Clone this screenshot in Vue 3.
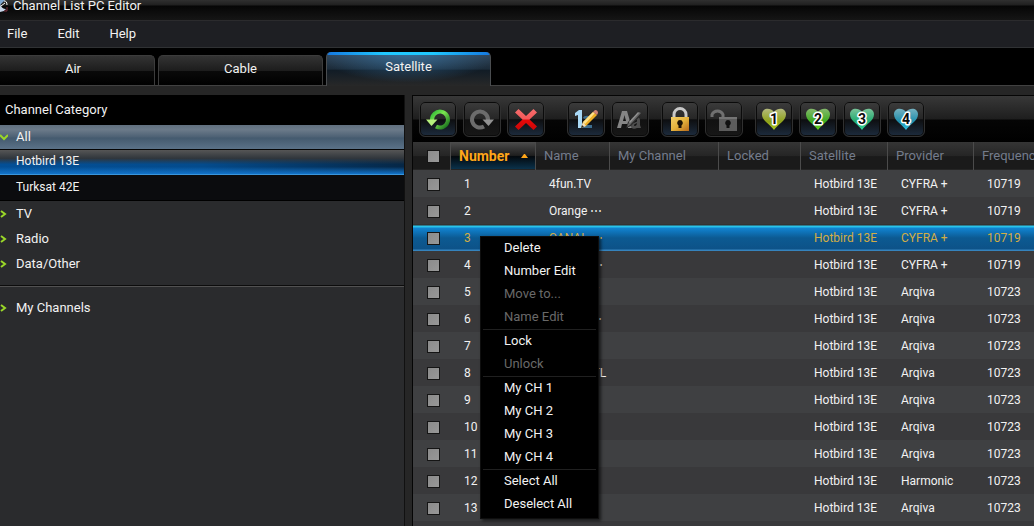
<script setup>
import { ref } from 'vue'

const tabs = ['Air', 'Cable', 'Satellite']
const activeTab = ref('Satellite')

const columns = ['Name', 'My Channel', 'Locked', 'Satellite', 'Provider', 'Frequency']
const names = [
  '4fun.TV', 'Orange ⋯', 'CANAL ⋯', 'CANAL ⋯', 'Music TV', 'Orange ⋯', 'Rai 1',
  'Arqiva RTL', 'Rai 2', 'Rai 3', 'Rai 4', 'TV 5', 'TV 6', 'TV 7'
]
const rows = names.map((name, i) => ({
  number: i + 1,
  name,
  provider: i < 4 ? 'CYFRA +' : i === 11 ? 'Harmonic' : 'Arqiva',
  frequency: i < 4 ? '10719' : '10723'
}))
const selectedRow = ref(3)

const hearts = [
  { n: 1, top: '#b4ba7c', mid: '#8fa31a', low: '#a9c51f' },
  { n: 2, top: '#84b86c', mid: '#3cab1e', low: '#66d51d' },
  { n: 3, top: '#78c298', mid: '#20ab70', low: '#31d99a' },
  { n: 4, top: '#74b0bf', mid: '#1e8eac', low: '#2fc3e3' }
]

const menuGroups = [
  [
    { label: 'Delete' },
    { label: 'Number Edit' },
    { label: 'Move to...', off: true },
    { label: 'Name Edit', off: true }
  ],
  [{ label: 'Lock' }, { label: 'Unlock', off: true }],
  [{ label: 'My CH 1' }, { label: 'My CH 2' }, { label: 'My CH 3' }, { label: 'My CH 4' }],
  [{ label: 'Select All' }, { label: 'Deselect All' }]
]
</script>

<template>
  <div class="app">
    <header class="title-bar">
      <svg class="dish" width="8" height="13" viewBox="0 0 8 13" aria-hidden="true">
        <path d="M0 0h5l-5 5z" fill="#7fa6cf" />
        <path d="M0 4c1 3 3 5 6 5L4 11 0 12z" fill="#c6d3e6" />
        <path d="M1 6l4-3M4 1c2 0 3 1 3 4" stroke="#fff" fill="none" />
        <path d="M7 7v4H4" stroke="#7c2f3a" fill="none" />
      </svg>
      <h1>Channel List PC Editor</h1>
    </header>

    <nav class="menu-bar">
      <button type="button">File</button>
      <button type="button">Edit</button>
      <button type="button">Help</button>
    </nav>

    <div class="tabs" role="tablist">
      <button
        v-for="t in tabs"
        :key="t"
        type="button"
        role="tab"
        :aria-selected="t === activeTab"
        :class="['tab', { active: t === activeTab }]"
        @click="activeTab = t"
      >{{ t }}</button>
    </div>

    <main class="main">
      <aside class="sidebar">
        <h2>Channel Category</h2>
        <button type="button" class="cat open">
          <svg width="8" height="8" viewBox="0 0 8 8" aria-hidden="true"><path d="M0 2l4 4 4-4" /></svg>All
        </button>
        <div class="sub">
          <button type="button" class="sat current">Hotbird 13E</button>
          <button type="button" class="sat">Turksat 42E</button>
        </div>
        <button v-for="c in ['TV', 'Radio', 'Data/Other']" :key="c" type="button" class="cat">
          <svg width="8" height="8" viewBox="0 0 8 8" aria-hidden="true"><path d="M1 1l4 3-4 3" /></svg>{{ c }}
        </button>
        <hr />
        <button type="button" class="cat">
          <svg width="8" height="8" viewBox="0 0 8 8" aria-hidden="true"><path d="M1 1l4 3-4 3" /></svg>My Channels
        </button>
      </aside>

      <section class="panel">
        <div class="toolbar">
          <div class="group wide">
            <button type="button" class="tool lit" aria-label="Undo">
              <svg width="26" height="24" viewBox="0 0 26 24">
                <defs>
                  <linearGradient id="undo" x1="0" y1="0" x2="1" y2="1">
                    <stop offset="0" stop-color="#2fb836" />
                    <stop offset=".4" stop-color="#7be650" />
                    <stop offset="1" stop-color="#12681a" />
                  </linearGradient>
                </defs>
                <path d="M7 13A8 8 0 1 1 11 19.500" fill="none" stroke="url(#undo)" stroke-width="4" />
                <path d="M1 12.500h11.500L6.500 19z" fill="#b4f07d" />
              </svg>
            </button>
            <button type="button" class="tool" aria-label="Redo">
              <svg width="26" height="24" viewBox="0 0 26 24">
                <path d="M19 13A8 8 0 1 0 15 19.500" fill="none" stroke="#6c6c6c" stroke-width="4" />
                <path d="M25 12.500H13.500l6 6.500z" fill="#919191" />
              </svg>
            </button>
            <button type="button" class="tool lit" aria-label="Delete">
              <svg width="24" height="24" viewBox="0 0 24 24">
                <defs>
                  <linearGradient id="cross" x1="0" y1="0" x2="0" y2="1">
                    <stop offset="0" stop-color="#f56e6e" />
                    <stop offset=".48" stop-color="#f45757" />
                    <stop offset=".52" stop-color="#e80808" />
                    <stop offset="1" stop-color="#c90808" />
                  </linearGradient>
                </defs>
                <path d="M4.500 2L12 9l7.500-7L23 5.500 15.500 12.500 23 19.500 19.500 23 12 16l-7.500 7L1 19.500 8.500 12.500 1 5.500z" fill="url(#cross)" />
              </svg>
            </button>
          </div>
          <div class="group">
            <button type="button" class="tool lit" aria-label="Edit number">
              <svg width="26" height="24" viewBox="0 0 26 24">
                <path d="M2 6l4-3h3v18H5V8L2 9z" fill="#a9d8f5" />
                <path d="M10 11c1-3 8-3 8 1 0 3-4 4-5 6h6v3H9v-2c1-4 6-5 6-7 0-1-2-1-3 0z" fill="#3d6e90" />
                <path d="M8 21l2-6L20 5l4 3-11 11z" fill="#eeae24" />
                <path d="M10 15L20 5l2 1-10 11z" fill="#ffe28a" />
                <path d="M20 5l2-2q3 0 3 3l-1 2z" fill="#d38372" />
                <path d="M8 21l2-6 3 4z" fill="#f0dfbc" />
                <path d="M8 21l1-3 2 2z" fill="#222" />
              </svg>
            </button>
            <button type="button" class="tool" aria-label="Edit name">
              <svg width="26" height="24" viewBox="0 0 26 24">
                <path d="M0 21L5 4h5l5 17h-4l-1-4H5l-1 4zM6 14h3L7.500 8z" fill="#858585" fill-rule="evenodd" />
                <path d="M14 12c2-4 9-3 9 1v5l1 3h-4c-3 2-7 0-6-3 1-3 6-2 6-4 0-2-3-1-3 0zM17 18c0 2 3 1 3-2-1 1-3 1-3 2z" fill="#4e4e4e" fill-rule="evenodd" />
                <path d="M9 21l2-6L22 4l3 3-11 12z" fill="#2c2c2c" />
                <path d="M10 20l2-5L22 5l2 1-11 12z" fill="#666" />
                <path d="M12 15L21 5l1 1-9 10z" fill="#929292" />
              </svg>
            </button>
          </div>
          <div class="group">
            <button type="button" class="tool lit" aria-label="Lock">
              <svg width="22" height="26" viewBox="0 0 22 26">
                <defs>
                  <linearGradient id="gold" x1="0" y1="0" x2="1" y2="1">
                    <stop offset="0" stop-color="#f2ce68" />
                    <stop offset=".5" stop-color="#e5b33c" />
                    <stop offset="1" stop-color="#b86a1c" />
                  </linearGradient>
                </defs>
                <path d="M5 12V8.500a6 6 0 0 1 12 0V12" fill="none" stroke="#c9c9c9" stroke-width="3" />
                <path d="M2 11h18v14H2z" fill="url(#gold)" />
                <path d="M11 14a3 3 0 0 1 1.500 5.500V22h-3v-2.500A3 3 0 0 1 11 14z" fill="#1c1205" />
              </svg>
            </button>
            <button type="button" class="tool" aria-label="Unlock">
              <svg width="30" height="26" viewBox="0 0 30 26">
                <path d="M3 11V8.500a6 6 0 0 1 11 0V12" fill="none" stroke="#707070" stroke-width="3" />
                <path d="M10 11h18v14H10z" fill="#5c5c5c" />
                <path d="M10 11h18v2H10z" fill="#747474" />
                <path d="M19 14a3 3 0 0 1 1.500 5.500V22h-3v-2.500A3 3 0 0 1 19 14z" fill="#111" />
              </svg>
            </button>
          </div>
          <div class="group">
            <button v-for="h in hearts" :key="h.n" type="button" class="tool lit" :aria-label="'My channel ' + h.n">
              <svg width="26" height="24" viewBox="0 0 26 24">
                <defs>
                  <linearGradient :id="'heart' + h.n" x1="0" y1="0" x2="0" y2="1">
                    <stop offset="0" :stop-color="h.top" />
                    <stop offset=".6" :stop-color="h.mid" />
                    <stop offset="1" :stop-color="h.low" />
                  </linearGradient>
                </defs>
                <path d="M13 23C10 18 1 14 1 7.500 1 1 9 0 13 5c4-5 12-4 12 2.500C25 14 16 18 13 23z" :fill="'url(#heart' + h.n + ')'" />
                <text x="13" y="17" text-anchor="middle" class="heart-no">{{ h.n }}</text>
              </svg>
            </button>
          </div>
        </div>

        <table class="grid">
          <colgroup>
            <col class="c-check" /><col class="c-number" /><col class="c-name" /><col class="c-my" />
            <col class="c-locked" /><col class="c-sat" /><col class="c-provider" /><col />
          </colgroup>
          <thead>
            <tr>
              <th class="check"><input type="checkbox" aria-label="Select all channels" /></th>
              <th class="sorted" aria-sort="ascending">
                <span class="sort">Number
                  <svg width="7" height="4" viewBox="0 0 7 4" aria-hidden="true"><path d="M0 4l3-4h1l3 4z" fill="#ffa619" /></svg>
                </span>
              </th>
              <th v-for="c in columns" :key="c">{{ c }}</th>
            </tr>
          </thead>
          <tbody>
            <tr v-for="r in rows" :key="r.number" :class="{ selected: r.number === selectedRow }" @click="selectedRow = r.number">
              <td class="check"><input type="checkbox" :aria-label="'Select channel ' + r.number" /></td>
              <td>{{ r.number }}</td>
              <td>{{ r.name }}</td>
              <td></td>
              <td></td>
              <td>Hotbird 13E</td>
              <td>{{ r.provider }}</td>
              <td>{{ r.frequency }}</td>
            </tr>
          </tbody>
        </table>

        <div class="context-menu" role="menu">
          <div v-for="(g, i) in menuGroups" :key="i" class="menu-group">
            <button v-for="m in g" :key="m.label" type="button" role="menuitem" :disabled="m.off">{{ m.label }}</button>
          </div>
        </div>
      </section>
    </main>
  </div>
</template>

<style>
body {
  margin: 0;
  background: #000;
}
</style>

<style scoped>
.app {
  display: flex;
  flex-direction: column;
  height: 100vh;
  overflow: hidden;
  background: #282828;
  color: #f2f2f2;
  font: 13px/16px Roboto, "Liberation Sans", sans-serif;
}
button {
  margin: 0;
  padding: 0;
  border: 0;
  background: none;
  color: inherit;
  font: inherit;
}
h1,
h2 {
  margin: 0;
  font: inherit;
}

.title-bar {
  display: flex;
  flex: none;
  gap: 5px;
  height: 21px;
  box-sizing: border-box;
  border-bottom: 1px solid #2b2b2d;
  background: linear-gradient(#303030, #202020 5px, #060606 6px, #151515);
}
.title-bar h1 {
  line-height: 12px;
}
.menu-bar {
  display: flex;
  flex: none;
  gap: 30px;
  height: 27px;
  box-sizing: border-box;
  padding: 0 7px;
  border-bottom: 1px solid #303234;
  background: #1e1f23;
}

.tabs {
  display: flex;
  flex: none;
  align-items: flex-end;
  gap: 3px;
  height: 38px;
  box-sizing: border-box;
  border-bottom: 1px solid #414141;
  background: #000;
}
.tab {
  width: 165px;
  height: 30px;
  box-sizing: border-box;
  padding-bottom: 4px;
  border: 1px solid #3c3c3c;
  border-bottom: 0;
  border-radius: 5px 5px 0 0;
  background: linear-gradient(#333, #1d1d1d 50%, #0a0a0a 51%, #000);
}
.tab:first-child {
  width: 155px;
  padding-right: 8px;
  border-left: 0;
  border-top-left-radius: 0;
}
.tab.active {
  height: 34px;
  margin-bottom: -1px;
  border-color: #4a4d50;
  border-top: 0;
  background:
    linear-gradient(90deg, #1578e0, #20c8ff 35%, #20c8ff 65%, #1578e0) 0 0 / 100% 3px no-repeat,
    radial-gradient(ellipse 55% 90% at 50% 0, #3f83b8aa, transparent),
    linear-gradient(#32465a, #1c2c3a 50%, #111c26 54%, #282828);
}

.main {
  display: grid;
  grid-template-columns: 405px minmax(0, 1fr);
  gap: 7px;
  flex: 1;
  min-height: 0;
  padding-top: 9px;
  background: #262626;
}
.sidebar {
  display: flex;
  flex-direction: column;
  border-right: 1px solid #111;
  background: #2a2b2d;
}
.sidebar h2 {
  height: 30px;
  padding-left: 5px;
  background: #000;
  line-height: 30px;
}
.cat {
  display: flex;
  align-items: center;
  gap: 8px;
  height: 25px;
  text-align: left;
}
.cat svg {
  fill: none;
  stroke: #9ad728;
  stroke-width: 2;
}
.cat.open {
  height: 24px;
  background: linear-gradient(#61707f, #6b7a89 20%, #4d6174 50%, #445a6e 54%, #5b7288);
}
.sub {
  display: flex;
  flex-direction: column;
  border-top: 1px solid #050505;
  border-bottom: 1px solid #000;
  background: #0b0c0e;
}
.sat {
  height: 25px;
  padding: 0 0 2px 16px;
  font-size: 12px;
  text-align: left;
}
.sat.current {
  border-bottom: 1px solid #3a96dc;
  background:
    linear-gradient(#565656, #30363c 35%, transparent 60%),
    linear-gradient(#0000 70%, #1273c9),
    linear-gradient(90deg, #034f96, #044b8c 50%, #062746);
}
.sidebar hr {
  width: 100%;
  height: 1px;
  margin: 9px 0 8px;
  border: 0;
  border-top: 1px solid #0c0c0c;
  background: #515151;
}

.panel {
  position: relative;
  overflow: hidden;
  border: solid #050505;
  border-width: 1px 0 0 1px;
  background: #3a3b3d;
}
.toolbar {
  display: flex;
  align-items: center;
  gap: 12px;
  height: 46px;
  box-sizing: border-box;
  padding-left: 6px;
  background: linear-gradient(#383838, #1e1e1e 23px, #050505 24px, #000);
}
.group {
  display: flex;
  gap: 6px;
}
.group.wide {
  margin-right: 10px;
}
.tool {
  display: grid;
  place-items: center;
  width: 38px;
  height: 36px;
  border: 1px solid #303030;
  border-radius: 6px;
  background: linear-gradient(#3c3c3c, #262626 50%, #111 52%, #171717);
  box-shadow: inset 0 0 0 1px #0b0b0b;
}
.tool.lit {
  background: linear-gradient(#3c3c3c, #262626 50%, #0d0e10 52%, #1d2c3e);
}
.heart-no {
  fill: #0a0a0a;
  stroke: #fff;
  stroke-width: 3px;
  stroke-linejoin: round;
  paint-order: stroke;
  font: bold 14px Roboto, sans-serif;
}

.grid {
  width: 100%;
  table-layout: fixed;
  border-collapse: separate;
  border-spacing: 0;
}
.c-check { width: 37px; }
.c-number { width: 85px; }
.c-name { width: 74px; }
.c-my { width: 109px; }
.c-locked { width: 82px; }
.c-sat { width: 87px; }
.c-provider { width: 86px; }
th {
  height: 28px;
  box-sizing: border-box;
  padding: 0 0 0 8px;
  border-left: 1px solid #4b4b4b;
  box-shadow: inset 0 -1px #242424;
  background: linear-gradient(#353535, #252525 50%, #1a1a1a 52%, #1a1a1a);
  color: #747c8c;
  font-weight: normal;
  text-align: left;
  white-space: nowrap;
}
th.sorted {
  background: linear-gradient(#4c4c4c, #1e1e1e 48%, #03090e 52%, #0b3550);
  color: #ffa619;
  font-size: 14px;
  font-weight: bold;
}
.sort {
  display: flex;
  align-items: center;
  gap: 12px;
}
td {
  height: 27px;
  box-sizing: border-box;
  padding: 0 0 0 14px;
  font-size: 12px;
  white-space: nowrap;
}
tbody tr {
  background: #3f4042;
}
tbody tr:nth-child(even) {
  background: #39393b;
}
tbody tr.selected {
  background: linear-gradient(#333 1px, #29c3ea 2px, #29c3ea 3px, #1184d2 4px, #0c5a92 14px, #0d5288 25px, #3583bd 26px);
  color: #d2ad46;
}
th.check,
td.check {
  padding: 0;
  border-left: 0;
  text-align: center;
}
input[type='checkbox'] {
  display: block;
  width: 13px;
  height: 13px;
  margin: 1px auto 0 14px;
  appearance: none;
  border: 1px solid #151515;
  background: linear-gradient(135deg, #8b8b8b, #989898);
}

.context-menu {
  position: absolute;
  top: 140px;
  left: 67px;
  width: 119px;
  box-sizing: border-box;
  padding: 0 2px 2px;
  border: 1px solid #0e0e0e;
  background: #000;
  box-shadow: 2px 2px 3px #0009;
}
.menu-group + .menu-group {
  border-top: 1px solid #202020;
}
.menu-group button {
  display: block;
  width: 100%;
  height: 23px;
  padding: 0 0 2px 21px;
  text-align: left;
}
.menu-group button:disabled {
  color: #696969;
}
</style>
